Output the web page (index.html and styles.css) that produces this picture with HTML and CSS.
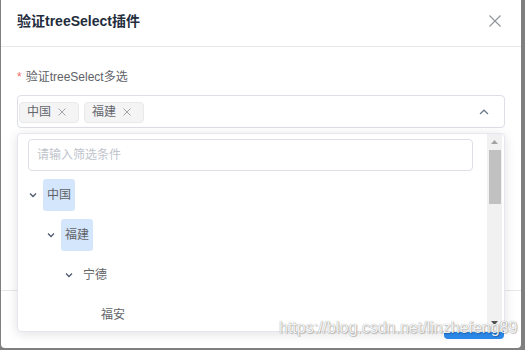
FILE: index.html
```html
<!DOCTYPE html>
<html lang="zh">
<head>
<meta charset="utf-8">
<title>验证treeSelect插件</title>
<link rel="stylesheet" href="styles.css">
</head>
<body>
<div class="dialog">
  <div class="header">
    <span class="title">验证treeSelect插件</span>
    <svg class="close" width="12" height="12" viewBox="0 0 12 12"><path d="M0.5 0.5 L11.5 11.5 M11.5 0.5 L0.5 11.5" stroke="#909399" stroke-width="1.1" fill="none"/></svg>
  </div>
  <div class="body">
    <div class="item">
      <div class="label"><span class="req">*</span>验证treeSelect多选</div>
      <div class="select-wrap">
        <div class="select">
          <span class="tag">中国<svg class="tag-x" width="12" height="8" viewBox="0 0 12 8"><path d="M2.5 0.5 L9.5 7.5 M9.5 0.5 L2.5 7.5" stroke="#a0a3a9" stroke-width="1" fill="none"/></svg></span>
          <span class="tag">福建<svg class="tag-x" width="12" height="8" viewBox="0 0 12 8"><path d="M2.5 0.5 L9.5 7.5 M9.5 0.5 L2.5 7.5" stroke="#a0a3a9" stroke-width="1" fill="none"/></svg></span>
          <svg class="arrow-up" width="10" height="6" viewBox="0 0 10 6"><path d="M1 5 L5 1.2 L9 5" stroke="#6f7c8f" stroke-width="1.3" fill="none"/></svg>
        </div>
        <div class="popup">
          <div class="popup-content">
            <div class="search">请输入筛选条件</div>
            <div class="tree">
              <div class="node lvl0"><svg class="chev" width="10" height="10" viewBox="0 0 10 10"><path d="M2 3.5 L5 6.5 L8 3.5" stroke="#4e5b6e" stroke-width="1.3" fill="none"/></svg><span class="node-label sel">中国</span></div>
              <div class="node lvl1"><svg class="chev" width="10" height="10" viewBox="0 0 10 10"><path d="M2 3.5 L5 6.5 L8 3.5" stroke="#4e5b6e" stroke-width="1.3" fill="none"/></svg><span class="node-label sel">福建</span></div>
              <div class="node lvl2"><svg class="chev" width="10" height="10" viewBox="0 0 10 10"><path d="M2 3.5 L5 6.5 L8 3.5" stroke="#4e5b6e" stroke-width="1.3" fill="none"/></svg><span class="node-label">宁德</span></div>
              <div class="node lvl3"><span class="chev-space"></span><span class="node-label">福安</span></div>
            </div>
          </div>
          <div class="scrollbar">
            <svg class="sb-up" width="15" height="15" viewBox="0 0 15 15"><path d="M4 10 L7.5 6 L11 10 Z" fill="#a3a3a3"/></svg>
            <div class="sb-thumb"></div>
            <div class="sb-fill"></div>
            <svg class="sb-down" width="15" height="15" viewBox="0 0 15 15"><path d="M4 5 L7.5 9 L11 5 Z" fill="#505050"/></svg>
          </div>
        </div>
      </div>
    </div>
    <div class="item second">
      <div class="label"><span class="req">*</span></div>
      <div class="textarea"></div>
    </div>
  </div>
  <div class="footer">
    <span class="btn primary"></span>
  </div>
</div>
<div class="watermark">https://blog.csdn.net/linzhefeng89</div>
</body>
</html>
```
FILE: styles.css
```css
html, body {
  margin: 0;
  padding: 0;
}
body {
  background: #7f7f7f;
  width: 525px;
  height: 350px;
  overflow: hidden;
  position: relative;
  font-family: "Liberation Sans", "Noto Sans CJK SC", sans-serif;
  font-size: 12px;
  color: #606266;
}
.dialog {
  margin-left: 1px;
  width: 520px;
  height: 348px;
  background: #fff;
  border-radius: 0 0 4px 4px;
  display: flex;
  flex-direction: column;
}
.header {
  height: 47px;
  border-bottom: 1px solid #e8e8e8;
  display: flex;
  align-items: center;
  justify-content: space-between;
  padding: 0 20px 5px 16px;
  box-sizing: border-box;
  flex: none;
}
.title {
  font-size: 14px;
  font-weight: bold;
  color: #1f2d3d;
  line-height: 20px;
}
.close {
  display: block;
}
.body {
  padding: 22px 16px 0 16px;
  flex: 1;
  border-bottom: 1px solid #e8e8e8;
}
.label {
  line-height: 16px;
  height: 16px;
  margin-bottom: 10px;
  color: #606266;
}
.req {
  color: #f56c6c;
  margin-right: 4px;
}
.select-wrap {
  position: relative;
}
.select {
  height: 33px;
  box-sizing: border-box;
  border: 1px solid #dcdfe6;
  border-radius: 4px;
  display: flex;
  align-items: center;
  gap: 5px;
  padding: 1px 15px 0 1px;
}
.tag {
  height: 21px;
  box-sizing: border-box;
  background: #f4f4f5;
  border: 1px solid #e9e9eb;
  border-radius: 4px;
  color: #63666d;
  display: inline-flex;
  align-items: center;
  padding: 0 10px 0 7px;
  line-height: 19px;
}
.tag-x {
  margin-left: 5px;
  display: block;
}
.arrow-up {
  margin-left: auto;
  display: block;
}
.popup {
  position: absolute;
  top: 38px;
  left: 0;
  right: 0;
  height: 199px;
  box-sizing: border-box;
  background: #fff;
  border: 1px solid #e4e7ed;
  border-radius: 4px;
  box-shadow: 0 2px 12px 0 rgba(0, 0, 0, 0.12);
  display: flex;
  overflow: hidden;
  z-index: 5;
}
.popup-content {
  flex: 1;
  padding: 5px 0 0 10px;
  overflow: hidden;
}
.search {
  width: 445px;
  height: 32px;
  box-sizing: border-box;
  border: 1px solid #dcdfe6;
  border-radius: 4px;
  padding-left: 8px;
  line-height: 30px;
  color: #c0c4cc;
}
.tree {
  margin-top: 4px;
}
.node {
  height: 40px;
  display: flex;
  align-items: center;
}
.lvl1 { padding-left: 18px; }
.lvl2 { padding-left: 36px; }
.lvl3 { padding-left: 54px; }
.chev {
  display: block;
  flex: none;
}
.chev-space {
  width: 10px;
  flex: none;
}
.node-label {
  margin-left: 5px;
  height: 32px;
  line-height: 32px;
  padding: 0 4px;
  border-radius: 3px;
  color: #606266;
}
.node-label.sel {
  background: #d4e6fc;
}
.scrollbar {
  width: 15px;
  margin-right: 2px;
  background: #f1f1f1;
  display: flex;
  flex-direction: column;
  flex: none;
}
.sb-up, .sb-down {
  display: block;
  flex: none;
}
.sb-thumb {
  height: 54px;
  margin: 1px 1px 0 2px;
  background: #c1c1c1;
  flex: none;
}
.sb-fill {
  flex: 1;
}
.second {
  margin-top: 31px;
}
.second .label {
  margin-bottom: 12px;
}
.textarea {
  height: 85px;
  box-sizing: border-box;
  border: 1px solid #dcdfe6;
  border-radius: 4px;
}
.footer {
  flex: none;
  height: 57px;
  box-sizing: border-box;
  padding: 16px 17px 9px 0;
  display: flex;
  justify-content: flex-end;
}
.btn {
  display: block;
  height: 32px;
  border-radius: 4px;
}
.btn.primary {
  background: #2d8cf0;
  width: 60px;
}
.watermark {
  position: absolute;
  left: 279px;
  top: 319px;
  font-family: "Liberation Sans", sans-serif;
  font-size: 16px;
  line-height: 18px;
  color: rgba(255, 255, 255, 0.92);
  text-shadow: 0 0 1px rgba(0, 0, 0, 0.45), 1px 1px 1px rgba(0, 0, 0, 0.2);
  z-index: 10;
}
```
